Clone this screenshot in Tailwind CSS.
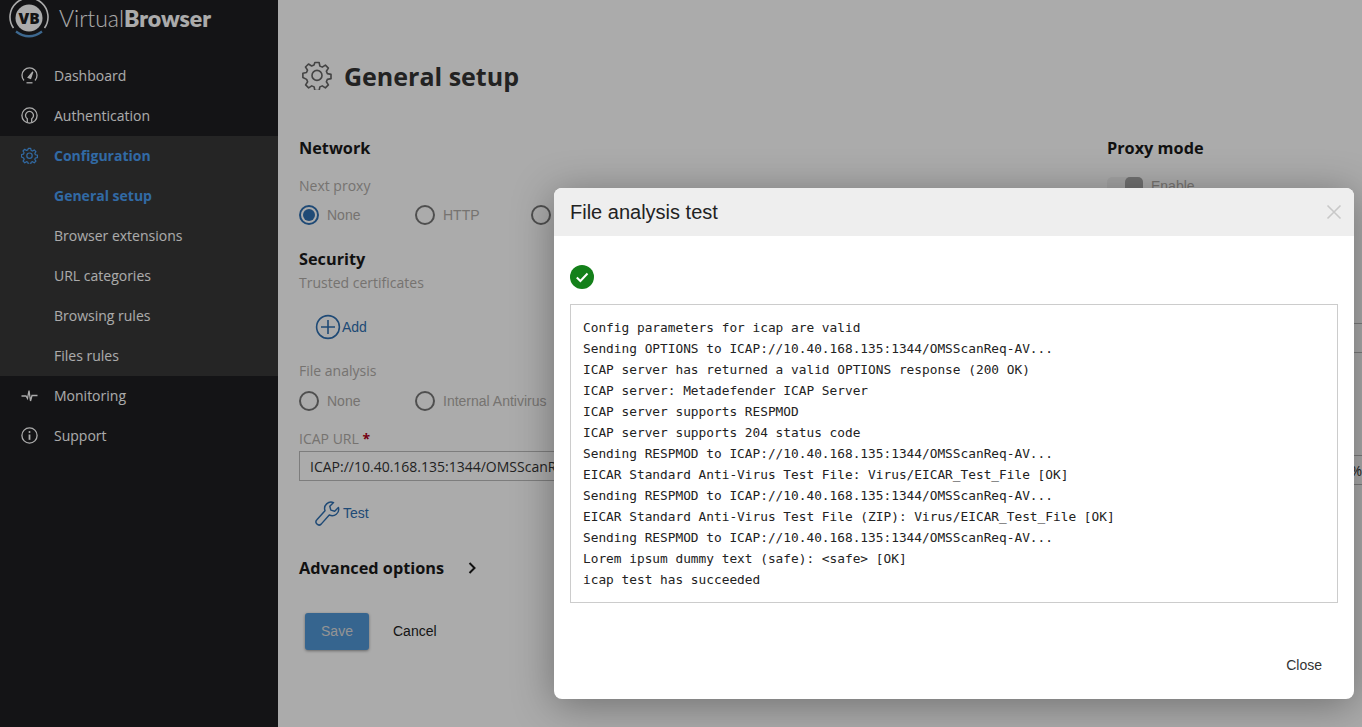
<!DOCTYPE html>
<html lang="en">
<head>
<meta charset="UTF-8">
<title>General setup</title>
<script src="https://cdn.jsdelivr.net/npm/@tailwindcss/browser@4"></script>
</head>
<body class="relative h-[727px] w-[1362px] overflow-hidden bg-white font-['Open_Sans',sans-serif]">
<div class="flex h-full">
  <!-- Sidebar -->
  <aside class="w-[278px] shrink-0 bg-[#1e1e21] text-[14px] text-white">
    <div class="flex h-[56px] items-start pl-[9px]">
      <svg class="h-[40px] w-[40px]" viewBox="0 0 40 40" fill="none">
        <path d="M4.5 28A19 19 0 1 1 35.5 28" stroke="#ffffff" stroke-width="1.6"/>
        <path d="M7 31.5Q20 41 33 31.5" stroke="#5b9bd5" stroke-width="2.2"/>
        <circle cx="20" cy="18" r="13.5" fill="#ffffff"/>
        <text x="20" y="23.5" text-anchor="middle" font-family="Open Sans" font-size="15.5" font-weight="800" fill="#1e1e21">VB</text>
      </svg>
      <span class="ml-[10px] mt-[4px] font-['Lato',sans-serif] text-[23px] leading-[28px] font-light text-white">Virtual<b class="font-extrabold">Browser</b></span>
    </div>
    <nav>
      <a class="flex h-[40px] items-center pb-[1px] pl-[21px]">
        <svg class="mr-[16px] h-[17px] w-[17px]" viewBox="0 0 17 17" fill="none" stroke="currentColor" stroke-width="1.3"><path d="M3 13.5A7.5 7.5 0 1 1 14 13.5"/><path d="M5.5 15.8H11.5"/><path d="M7.2 10.5L11.8 4.8L9.6 11.4Z" fill="currentColor"/></svg>Dashboard</a>
      <a class="flex h-[40px] items-center pb-[1px] pl-[21px]">
        <svg class="mr-[16px] h-[17px] w-[17px]" viewBox="0 0 17 17" fill="none" stroke="currentColor" stroke-width="1.3"><circle cx="8.5" cy="8.5" r="7.6"/><path d="M6.3 15.6V11.8A4 4 0 1 1 10.7 11.8V15.6"/></svg>Authentication</a>
      <div class="bg-[#383838]">
        <a class="flex h-[40px] items-center pb-[1px] pl-[21px] font-bold text-[#4a9ff5]">
          <svg class="mr-[16px] h-[17px] w-[17px]" viewBox="0 0 24 24" fill="none" stroke="currentColor" stroke-width="1.7" stroke-linejoin="round"><path d="M10.3 2h3.4l.6 2.9 1.9.8 2.5-1.6 2.4 2.4-1.6 2.5.8 1.9 2.9.6v3.4l-2.9.6-.8 1.9 1.6 2.5-2.4 2.4-2.5-1.6-1.9.8-.6 2.9h-3.4l-.6-2.9-1.9-.8-2.5 1.6-2.4-2.4 1.6-2.5-.8-1.9L.7 14v-3.4l2.9-.6.8-1.9-1.6-2.5 2.4-2.4 2.5 1.6 1.9-.8z"/><circle cx="12" cy="12.3" r="3.8"/></svg>Configuration</a>
        <a class="flex h-[40px] items-center pb-[1px] pl-[54px] font-bold text-[#4a9ff5]">General setup</a>
        <a class="flex h-[40px] items-center pb-[1px] pl-[54px]">Browser extensions</a>
        <a class="flex h-[40px] items-center pb-[1px] pl-[54px]">URL categories</a>
        <a class="flex h-[40px] items-center pb-[1px] pl-[54px]">Browsing rules</a>
        <a class="flex h-[40px] items-center pb-[1px] pl-[54px]">Files rules</a>
      </div>
      <a class="flex h-[40px] items-center pb-[1px] pl-[21px]">
        <svg class="mr-[16px] h-[17px] w-[17px]" viewBox="0 0 17 17" fill="none" stroke="currentColor" stroke-width="1.3"><path d="M0.5 9H5L6.5 11.5L8 3.5L9.5 14L11 8.5H16.5"/></svg>Monitoring</a>
      <a class="flex h-[40px] items-center pb-[1px] pl-[21px]">
        <svg class="mr-[16px] h-[17px] w-[17px]" viewBox="0 0 17 17" fill="none" stroke="currentColor" stroke-width="1.3"><circle cx="8.5" cy="8.5" r="7.6"/><path d="M8.5 7.5V12.8" stroke-width="1.8"/><circle cx="8.5" cy="5" r="1" fill="currentColor" stroke="none"/></svg>Support</a>
    </nav>
  </aside>

  <!-- Page -->
  <main class="min-w-0 flex-1 pl-[21px] text-[#333]">
    <div class="flex h-[148px] items-start pt-[60px] pl-[3px]">
      <svg class="mr-[12px] h-[30px] w-[30px] text-[#666]" viewBox="0 0 24 24" fill="none" stroke="currentColor" stroke-width="1.3" stroke-linejoin="round"><path d="M10.3 2h3.4l.6 2.9 1.9.8 2.5-1.6 2.4 2.4-1.6 2.5.8 1.9 2.9.6v3.4l-2.9.6-.8 1.9 1.6 2.5-2.4 2.4-2.5-1.6-1.9.8-.6 2.9h-3.4l-.6-2.9-1.9-.8-2.5 1.6-2.4-2.4 1.6-2.5-.8-1.9L.7 14v-3.4l2.9-.6.8-1.9-1.6-2.5 2.4-2.4 2.5 1.6 1.9-.8z"/><circle cx="12" cy="12.3" r="4"/></svg>
      <h1 class="-mt-[1px] text-[25px] leading-[34px] font-bold text-[#333]">General setup</h1>
    </div>
    <div class="flex">
      <section class="w-[808px] shrink-0">
        <h2 class="-mt-[11px] text-[16.3px] leading-[22px] font-bold text-[#1a1a1a]">Network</h2>
        <p class="mt-[17px] text-[14px] leading-[20px] text-[#b0aca8]">Next proxy</p>
        <div class="mt-[9px] flex h-[20px] items-center font-['Liberation_Sans',sans-serif] text-[14px] text-[#b0aca8]">
          <span class="flex w-[116px] items-center"><span class="mr-[8px] flex h-[20px] w-[20px] items-center justify-center rounded-full border-2 border-[#2f6fb0]"><span class="h-[12px] w-[12px] rounded-full bg-[#2f6fb0]"></span></span>None</span>
          <span class="flex w-[116px] items-center"><span class="mr-[8px] h-[20px] w-[20px] rounded-full border-2 border-[#777]"></span>HTTP</span>
          <span class="h-[20px] w-[20px] rounded-full border-2 border-[#777]"></span>
        </div>
        <h2 class="mt-[23px] text-[16.3px] leading-[22px] font-bold text-[#1a1a1a]">Security</h2>
        <p class="mt-[3px] text-[14px] leading-[20px] text-[#b0aca8]">Trusted certificates</p>
        <div class="mt-[21px] ml-[16px] flex h-[26px] items-center font-['Liberation_Sans',sans-serif] text-[14px] text-[#2f6fb0]">
          <svg class="mr-[1px] h-[26px] w-[26px]" viewBox="0 0 26 26" fill="none" stroke="currentColor" stroke-width="1.6"><circle cx="13" cy="13" r="11.4"/><path d="M13 6V20M6 13H20"/></svg>Add
        </div>
        <p class="mt-[21px] text-[14px] leading-[20px] text-[#b0aca8]">File analysis</p>
        <div class="mt-[10px] flex h-[20px] items-center font-['Liberation_Sans',sans-serif] text-[14px] text-[#b0aca8]">
          <span class="flex w-[116px] items-center"><span class="mr-[8px] h-[20px] w-[20px] rounded-full border-2 border-[#777]"></span>None</span>
          <span class="flex items-center"><span class="mr-[8px] h-[20px] w-[20px] rounded-full border-2 border-[#777]"></span>Internal Antivirus</span>
        </div>
        <p class="mt-[18px] text-[14px] leading-[20px] text-[#b0aca8]">ICAP URL <span class="font-bold text-[#b00020]">*</span></p>
        <div class="mt-[2px] flex h-[30px] w-[700px] items-center border border-[#bbb] px-[10px] text-[14px] text-[#333]">ICAP://10.40.168.135:1344/OMSScanReq-AV</div>
        <div class="mt-[18px] ml-[16px] flex h-[28px] items-center font-['Liberation_Sans',sans-serif] text-[14px] text-[#2f6fb0]">
          <svg class="mr-[3px] h-[25px] w-[25px]" viewBox="0 0 24 24" fill="none" stroke="currentColor" stroke-width="1.4" stroke-linejoin="round"><path d="M22.5 6.2l-3.6 3.6-3.7-1-1-3.7 3.6-3.6a6.2 6.2 0 0 0-8.2 7.8L1.8 18.1a2.9 2.9 0 0 0 4.1 4.1l7.8-8.8a6.2 6.2 0 0 0 8.8-7.2z"/></svg>Test
        </div>
        <div class="mt-[30px] flex items-center text-[#1a1a1a]">
          <h2 class="text-[16.3px] leading-[22px] font-bold">Advanced options</h2>
          <svg class="ml-[24px] h-[12px] w-[8px]" viewBox="0 0 8 12" fill="none" stroke="currentColor" stroke-width="2"><path d="M1.5 1L6.5 6L1.5 11"/></svg>
        </div>
        <div class="mt-[34px] ml-[6px] flex items-center font-['Liberation_Sans',sans-serif] text-[14px]">
          <button class="h-[37px] w-[64px] rounded-[3px] bg-[#5197d6] text-[#ddd] shadow-[0_1px_3px_rgba(0,0,0,0.4)]">Save</button>
          <button class="ml-[24px] text-[#222]">Cancel</button>
        </div>
      </section>
      <section class="min-w-0 flex-1">
        <h2 class="-mt-[11px] text-[16.3px] leading-[22px] font-bold text-[#1a1a1a]">Proxy mode</h2>
        <div class="mt-[17px] flex items-center font-['Liberation_Sans',sans-serif] text-[14px] text-[#b0aca8]">
          <span class="mr-[8px] flex h-[20px] w-[36px] justify-end rounded-[5px] bg-[#f4f4f4]"><span class="h-[20px] w-[18px] rounded-[5px] bg-[#a8a8a8]"></span></span>Enable
        </div>
        <div class="mt-[126px] h-[30px] border-y border-[#bbb]"></div>
        <div class="mt-[102px] flex h-[30px] items-center justify-end border-y border-[#bbb] text-[14px]">100%</div>
      </section>
    </div>
  </main>
</div>

<!-- Overlay -->
<div class="absolute inset-0 bg-black/33"></div>

<!-- Modal -->
<div class="absolute top-[188px] left-[554px] flex h-[511px] w-[800px] flex-col overflow-hidden rounded-[8px] bg-white font-['Liberation_Sans',sans-serif] shadow-[0_6px_40px_rgba(0,0,0,0.35)]">
  <div class="flex h-[48px] shrink-0 items-center justify-between bg-[#eeeeee] pr-[12px] pl-[16px]">
    <h3 class="text-[20px] text-[#222]">File analysis test</h3>
    <svg class="h-[16px] w-[16px] text-[#c8c8c8]" viewBox="0 0 16 16" fill="none" stroke="currentColor" stroke-width="1.6"><path d="M1.5 1.5L14.5 14.5M14.5 1.5L1.5 14.5"/></svg>
  </div>
  <div class="flex-1 px-[16px] pt-[29px]">
    <svg class="h-[24px] w-[24px]" viewBox="0 0 24 24"><circle cx="12" cy="12" r="12" fill="#14801a"/><path d="M6.8 12.5L10.4 16L17.5 8.5" fill="none" stroke="#fff" stroke-width="2"/></svg>
    <pre class="mt-[15px] h-[299px] border border-[#ccc] px-[12px] pt-[12px] font-['DejaVu_Sans_Mono',monospace] text-[12.8px] leading-[21px] text-[#222]">Config parameters for icap are valid
Sending OPTIONS to ICAP://10.40.168.135:1344/OMSScanReq-AV...
ICAP server has returned a valid OPTIONS response (200 OK)
ICAP server: Metadefender ICAP Server
ICAP server supports RESPMOD
ICAP server supports 204 status code
Sending RESPMOD to ICAP://10.40.168.135:1344/OMSScanReq-AV...
EICAR Standard Anti-Virus Test File: Virus/EICAR_Test_File [OK]
Sending RESPMOD to ICAP://10.40.168.135:1344/OMSScanReq-AV...
EICAR Standard Anti-Virus Test File (ZIP): Virus/EICAR_Test_File [OK]
Sending RESPMOD to ICAP://10.40.168.135:1344/OMSScanReq-AV...
Lorem ipsum dummy text (safe): &lt;safe&gt; [OK]
icap test has succeeded</pre>
  </div>
  <div class="flex h-[68px] shrink-0 items-center justify-end pr-[32px] text-[14px] text-[#333]">Close</div>
</div>
</body>
</html>
